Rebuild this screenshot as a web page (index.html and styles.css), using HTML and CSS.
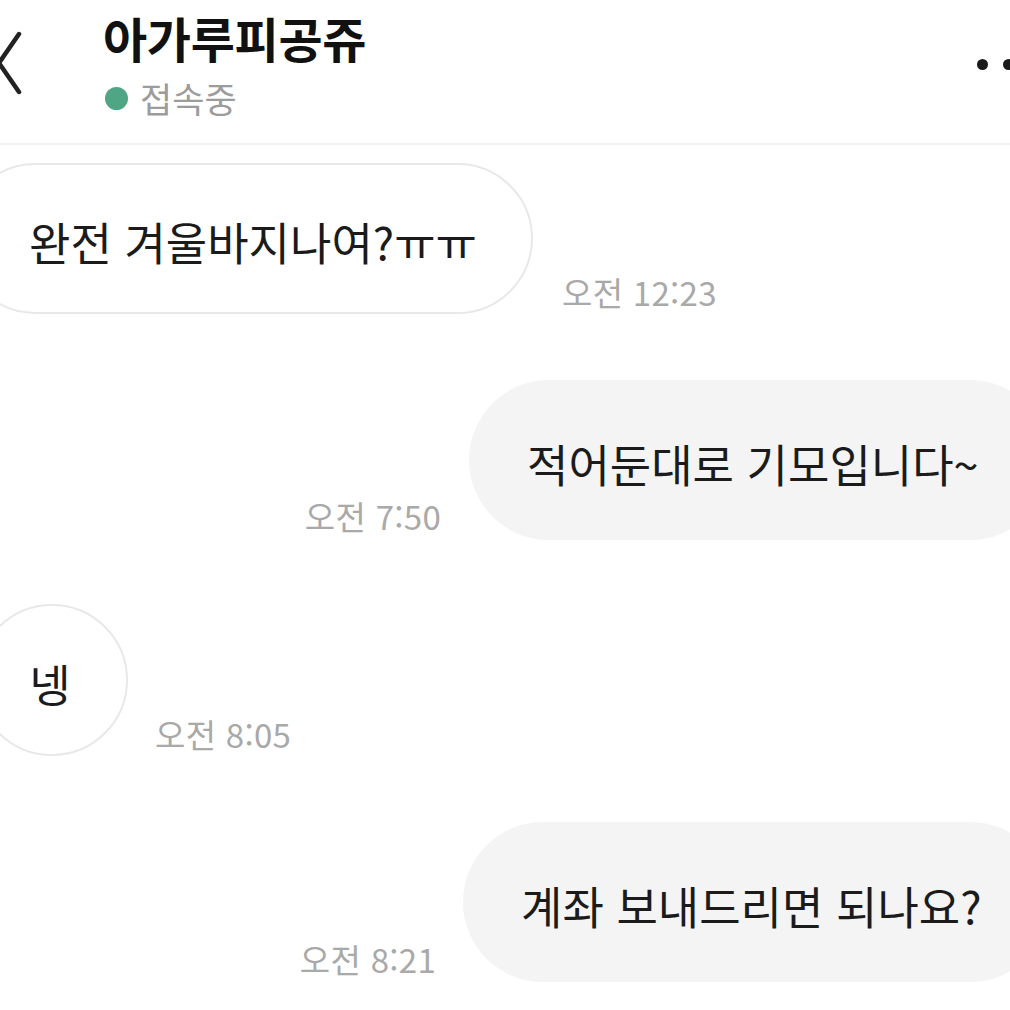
FILE: index.html
```html
<!DOCTYPE html>
<html lang="ko">
<head>
<meta charset="utf-8">
<link rel="stylesheet" href="styles.css">
</head>
<body>
<div class="screen">
  <header class="header">
    <svg class="back" width="30" height="70" viewBox="0 0 30 70"><path d="M19 4 L-1 33 L19 62" fill="none" stroke="#222" stroke-width="4.5" stroke-linecap="round" stroke-linejoin="round"/></svg>
    <div class="who">
      <div class="name">아가루피공쥬</div>
      <div class="status"><span class="dot"></span><span>접속중</span></div>
    </div>
    <div class="more"><span></span><span></span><span></span></div>
  </header>
  <main class="chat">
    <div class="row other r1">
      <div class="bubble in b1">완전 겨울바지나여?ㅠㅠ</div>
      <div class="time">오전 12:23</div>
    </div>
    <div class="row mine r2">
      <div class="time">오전 7:50</div>
      <div class="bubble out b2">적어둔대로 기모입니다~</div>
    </div>
    <div class="row other r3">
      <div class="bubble in b3">넹</div>
      <div class="time">오전 8:05</div>
    </div>
    <div class="row mine r4">
      <div class="time">오전 8:21</div>
      <div class="bubble out b4">계좌 보내드리면 되나요?</div>
    </div>
  </main>
</div>
</body>
</html>
```

FILE: styles.css
```css
html, body {
  margin: 0;
  padding: 0;
  background: #fff;
}
body {
  width: 1010px;
  height: 1010px;
  overflow: hidden;
  font-family: "Noto Sans CJK KR", "Noto Sans", sans-serif;
  color: #1b1b1b;
}
.screen {
  width: 1010px;
  overflow: hidden;
}
.header {
  height: 143px;
  border-bottom: 2px solid #f1f1f1;
  display: flex;
  align-items: flex-start;
  position: relative;
}
.back {
  margin-top: 30px;
  flex: none;
}
.who {
  margin-left: 73px;
  margin-top: 4px;
}
.name {
  font-size: 48px;
  font-weight: 700;
  line-height: 66px;
  color: #111;
  letter-spacing: -0.3px;
}
.status {
  display: flex;
  align-items: center;
  font-size: 35px;
  color: #9c9c9c;
  line-height: 48px;
  margin-top: 4px;
}
.dot {
  width: 23px;
  height: 23px;
  border-radius: 50%;
  background: #4ea685;
  margin-left: 2px;
  margin-right: 12px;
}
.more {
  margin-left: auto;
  margin-right: -30px;
  margin-top: 59px;
  display: flex;
  gap: 15px;
}
.more span {
  width: 11px;
  height: 11px;
  border-radius: 50%;
  background: #1a1a1a;
}
.chat {
  display: flex;
  flex-direction: column;
  padding-top: 18px;
}
.row {
  display: flex;
  align-items: flex-end;
}
.other {
  justify-content: flex-start;
}
.mine {
  justify-content: flex-end;
  margin-right: -40px;
}
.bubble {
  font-size: 45px;
  display: flex;
  align-items: center;
  box-sizing: border-box;
  white-space: nowrap;
  padding-top: 6px;
}
.in {
  background: #fff;
  border: 2px solid #e8e8e8;
  border-radius: 80px;
}
.out {
  background: #f4f4f4;
  border-radius: 80px;
}
.time {
  font-size: 33px;
  letter-spacing: 0.3px;
  color: #a9a9a9;
  line-height: 36px;
  white-space: nowrap;
}
.b1 {
  margin-left: -40px;
  width: 573px;
  height: 151px;
  padding-left: 67px;
}
.r1 .time {
  margin-left: 29px;
  margin-bottom: 4px;
}
.r2 {
  margin-top: 66px;
}
.b2 {
  width: 581px;
  height: 160px;
  padding-left: 58px;
}
.r2 .time {
  margin-right: 28px;
  margin-bottom: 6px;
}
.r3 {
  margin-top: 64px;
}
.b3 {
  margin-left: -24px;
  width: 152px;
  height: 152px;
  border-radius: 50%;
  justify-content: center;
  padding-right: 4px;
}
.r3 .time {
  margin-left: 27px;
  margin-bottom: 4px;
}
.r4 {
  margin-top: 66px;
}
.b4 {
  width: 587px;
  height: 160px;
  padding-left: 58px;
}
.r4 .time {
  margin-right: 27px;
  margin-bottom: 5px;
}
```
